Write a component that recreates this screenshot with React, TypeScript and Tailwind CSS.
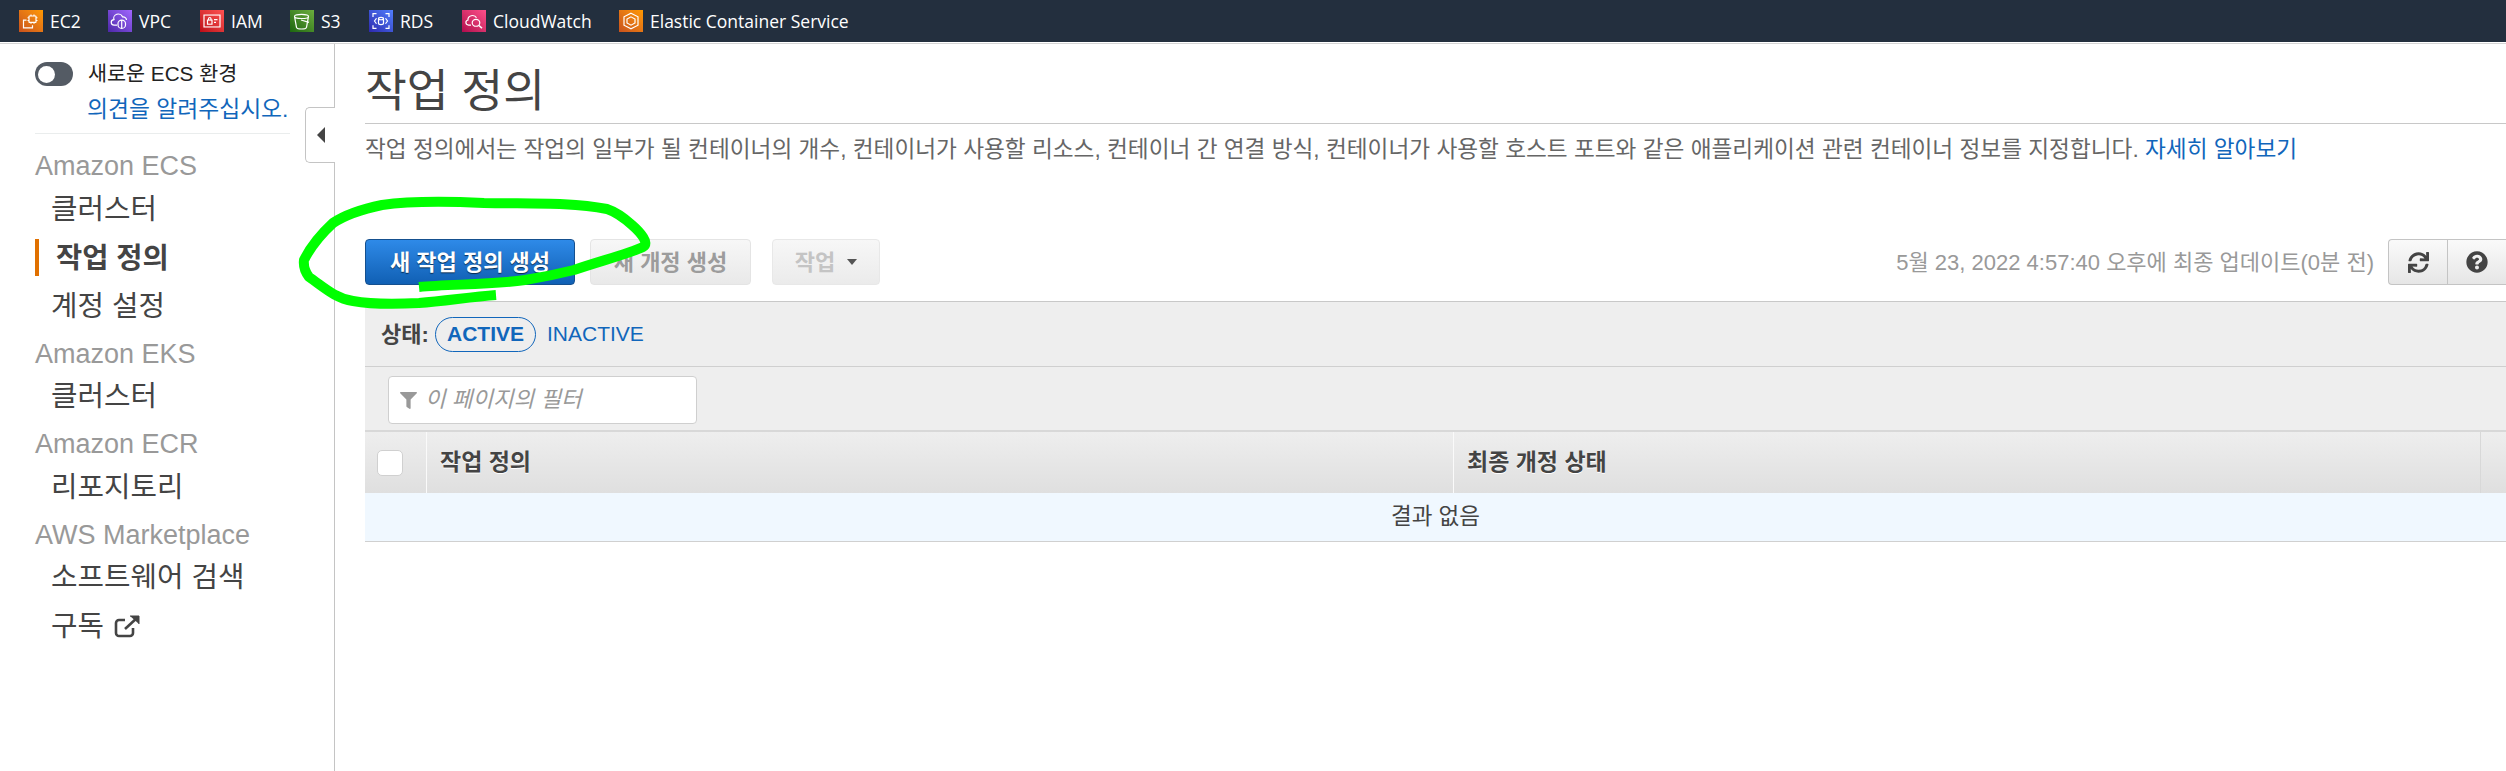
import React from "react";
import { FaFilter, FaQuestionCircle, FaSync } from "react-icons/fa";

const uiFont = { fontFamily: '"Liberation Sans", "Noto Sans CJK KR", Arial, sans-serif' };

const services = [
  { name: "EC2", bg: "from-[#c8511b] to-[#ff9900]", width: "w-[89px]" },
  { name: "VPC", bg: "from-[#4d27a8] to-[#a166ff]", width: "w-[92px]" },
  { name: "IAM", bg: "from-[#bd0816] to-[#ff5252]", width: "w-[90px]" },
  { name: "S3", bg: "from-[#1b660f] to-[#6cae3e]", width: "w-[79px]" },
  { name: "RDS", bg: "from-[#2e27ad] to-[#527fff]", width: "w-[93px]" },
  { name: "CloudWatch", bg: "from-[#b0084d] to-[#ff4f8b]", width: "w-[157px]" },
  { name: "Elastic Container Service", bg: "from-[#c8511b] to-[#ff9900]", width: "w-[240px]" },
];

function ServiceGlyph({ name }: { name: string }) {
  const p = { fill: "none", stroke: "#fff", strokeWidth: 1.2 };
  if (name === "EC2")
    return (
      <g {...p}>
        <rect x="10" y="6.500" width="7" height="7" rx="0.500" />
        <path d="M10 8.500H8.500M10 11.500H8.500M17 8.500h1.500M17 11.500h1.500M12 6.500V5M15 6.500V5M12 13.500V15M15 13.500V15" />
        <path d="M7.500 11H4.500v8.500h9V16.500" />
      </g>
    );
  if (name === "VPC")
    return (
      <g {...p}>
        <path d="M9 16.500H6.500a3 3 0 0 1-.5-6 4.500 4.500 0 0 1 8.500-3 3.500 3.500 0 0 1 4 3.500" />
        <rect x="10" y="11" width="7.500" height="9" rx="3.700" />
        <path d="M13.700 11v9" />
      </g>
    );
  if (name === "IAM")
    return (
      <g {...p}>
        <rect x="4" y="5.500" width="16" height="13" />
        <rect x="7.500" y="11" width="4.500" height="4.500" />
        <path d="M8.500 11V9.500a1.200 1.200 0 0 1 2.500 0V11M14 10.500h3.500M14 13.500h2" />
      </g>
    );
  if (name === "S3")
    return (
      <g {...p}>
        <path d="M4.500 7c0-3 14-3 14 0s-14 3-14 0zM4.500 7l2 12c1 2.200 9 2.200 10 0l2-12" />
        <path d="M11 11l8 2.500" />
      </g>
    );
  if (name === "RDS")
    return (
      <g {...p}>
        <path d="M4 7.500V4h3.500M16.500 4H20v3.500M4 16.500V20h3.500M16.500 20H20v-3.500" />
        <path d="M9.500 9.500c0-2 5-2 5 0v5c0 2-5 2-5 0zM9.500 9.500c0 1.500 5 1.500 5 0" />
        <path d="M7.500 9L5.500 12l2 3M16.500 9l2 3-2 3" />
      </g>
    );
  if (name === "CloudWatch")
    return (
      <g {...p}>
        <path d="M9 16.500H6.500a2.800 2.800 0 0 1-.5-5.500 4.500 4.500 0 0 1 8.500-2.500" />
        <circle cx="14" cy="14" r="3.800" />
        <path d="M17 17l3 3" strokeWidth="1.600" />
      </g>
    );
  return (
    <g {...p}>
      <path d="M12 3.500l7 4v9l-7 4-7-4v-9z" />
      <path d="M12 7.500l4 2.300v4.400l-4 2.300-4-2.300V9.800z" />
    </g>
  );
}

function TopBar() {
  return (
    <div
      className="h-[42px] bg-[#232f3e] flex items-center pl-[19px] text-[17.500px] text-white whitespace-nowrap"
      style={{ fontFamily: '"Open Sans", "Noto Sans", sans-serif' }}
    >
      {services.map((s) => (
        <div key={s.name} className={`flex items-center shrink-0 ${s.width}`}>
          <div className={`w-[24px] h-[22px] bg-linear-to-tr ${s.bg}`}>
            <svg viewBox="0 0 24 24" className="w-full h-full" preserveAspectRatio="none">
              <ServiceGlyph name={s.name} />
            </svg>
          </div>
          <span className="ml-[7px]">{s.name}</span>
        </div>
      ))}
    </div>
  );
}

function NavHeader({ children }: { children: React.ReactNode }) {
  return <div className="h-[42px] pt-[6px] leading-[36px] text-[27px] text-[#999] whitespace-nowrap">{children}</div>;
}

function NavItem({ children, active }: { children: React.ReactNode; active?: boolean }) {
  return (
    <div className="h-[48.500px] pt-[2px] flex items-center whitespace-nowrap">
      {active ? (
        <div className="h-[37px] border-l-[4px] border-[#e07000] pl-[17px] text-[28.500px] leading-[38px] font-bold text-[#444]">
          {children}
        </div>
      ) : (
        <div className="pl-[16px] text-[28.800px] text-[#444] flex items-center">{children}</div>
      )}
    </div>
  );
}

function Sidebar() {
  return (
    <div className="relative w-[335px] shrink-0 border-r border-[#c4c4c4] pl-[35px] pr-[44px]">
      <div className="flex items-center h-[24px] mt-[18px] whitespace-nowrap">
        <div className="w-[38px] h-[24px] rounded-full bg-[#545b64] flex items-center pl-[3px]">
          <div className="w-[17px] h-[17px] rounded-full bg-white" />
        </div>
        <span className="ml-[15px] text-[20.700px] text-[#222]">새로운 ECS 환경</span>
      </div>
      <div className="mt-[8px] pl-[52px] pb-[9px] mb-[8px] text-[22.800px] leading-[30px] text-[#1166bb] whitespace-nowrap border-b border-[#eaeded]">
        의견을 알려주십시오.
      </div>
      <NavHeader>Amazon ECS</NavHeader>
      <NavItem>클러스터</NavItem>
      <NavItem active>작업 정의</NavItem>
      <NavItem>계정 설정</NavItem>
      <NavHeader>Amazon EKS</NavHeader>
      <NavItem>클러스터</NavItem>
      <NavHeader>Amazon ECR</NavHeader>
      <NavItem>리포지토리</NavItem>
      <NavHeader>AWS Marketplace</NavHeader>
      <NavItem>소프트웨어 검색</NavItem>
      <NavItem>
        구독
        <svg viewBox="0 0 27 24" className="w-[27px] h-[24px] ml-[10px]" fill="none" stroke="#444" strokeWidth="2.600">
          <path d="M19 14v5a3 3 0 0 1-3 3H5a3 3 0 0 1-3-3V9a3 3 0 0 1 3-3h6" />
          <path d="M11 15L24 3" />
          <path d="M16 2h9v8" fill="#444" strokeWidth="1" />
        </svg>
      </NavItem>
      {/* collapse tab sits over the sidebar border */}
      <div className="absolute left-[305px] top-[63px] w-[30px] h-[56px] bg-white border border-r-0 border-[#c4c4c4] rounded-l-[5px] flex items-center justify-center">
        <div className="w-0 h-0 border-y-[8px] border-y-transparent border-r-[8px] border-r-[#444]" />
      </div>
    </div>
  );
}

function Toolbar() {
  return (
    <div className="mt-[75px] flex items-center h-[46px] mb-[16px]">
      <button className="w-[210px] h-[46px] rounded-[4px] border border-[#15508f] bg-linear-to-b from-[#2e8ae8] to-[#1060b4] text-white font-bold text-[22px] whitespace-nowrap [text-shadow:0_1px_1px_rgba(0,0,0,0.6)]">
        새 작업 정의 생성
      </button>
      <button className="ml-[15px] w-[161px] h-[46px] rounded-[4px] border border-[#e4e4e4] bg-linear-to-b from-[#f7f7f7] to-[#e9e9e9] text-[#9c9c9c] font-bold text-[22px] whitespace-nowrap">
        새 개정 생성
      </button>
      <button className="ml-[21px] w-[108px] h-[46px] rounded-[4px] border border-[#e8e8e8] bg-linear-to-b from-[#f7f7f7] to-[#ebebeb] text-[#c4c4c4] font-bold text-[22px] flex items-center justify-center">
        작업
        <span className="ml-[12px] w-0 h-0 border-x-[5px] border-x-transparent border-t-[6px] border-t-[#555]" />
      </button>
      <div className="ml-auto text-[22px] text-[#999] whitespace-nowrap mr-[14px]">5월 23, 2022 4:57:40 오후에 최종 업데이트(0분 전)</div>
      <div className="flex w-[118px] h-[46px] rounded-l-[4px] border border-r-0 border-[#c4c4c4] bg-linear-to-b from-[#fafafa] to-[#e6e6e6] shrink-0">
        <div className="w-[59px] border-r border-[#c4c4c4] flex items-center justify-center text-[#444]">
          <FaSync size={21} />
        </div>
        <div className="flex-1 flex items-center justify-center text-[#444]">
          <FaQuestionCircle size={22} />
        </div>
      </div>
    </div>
  );
}

function ResultsTable() {
  return (
    <div>
      <div className="bg-[#eeeeee] border-t border-[#c8c8c8]">
        <div className="h-[65px] border-b border-[#cfcfcf] flex items-center pl-[16px] text-[21px] whitespace-nowrap">
          <span className="w-[48px] font-bold text-[22px] text-[#444]">상태:</span>
          <span className="ml-[6px] h-[35px] w-[101px] rounded-full border border-[#1166bb] font-bold text-[#1166bb] flex items-center justify-center">ACTIVE</span>
          <span className="ml-[11px] text-[#1166bb]">INACTIVE</span>
        </div>
        <div className="h-[65px] border-b-2 border-[#d8d8d8] pt-[9px] pl-[23px]">
          <div className="w-[309px] h-[48px] bg-white rounded-[4px] border border-[#cfcfcf] flex items-center pl-[11px]">
            <FaFilter size={17} className="text-[#999]" />
            <span className="ml-[8px] text-[22.400px] italic text-[#999]">이 페이지의 필터</span>
          </div>
        </div>
      </div>
      <div className="flex h-[61px] bg-linear-to-b from-[#eeeeee] to-[#dfdfdf] text-[23px] font-bold text-[#444] [text-shadow:0_1px_0_#fff]">
        <div className="w-[62px] border-r border-[#fafafa] flex items-center pl-[12px]">
          <div className="w-[26px] h-[26px] rounded-[5px] bg-white border border-[#d0d0d0]" />
        </div>
        <div className="w-[1027px] border-r border-[#fafafa] flex items-center pl-[13px]">작업 정의</div>
        <div className="w-[1027px] border-r border-[#d8d8d8] flex items-center pl-[13px]">최종 개정 상태</div>
      </div>
      <div className="h-[49px] bg-[#f0f8ff] border-b border-[#d0d0d0] flex items-center justify-center text-[22.500px] text-[#444]">결과 없음</div>
    </div>
  );
}

export default function App() {
  return (
    <div className="relative h-[771px] w-[2506px] overflow-hidden bg-white" style={uiFont}>
      <TopBar />
      <div className="h-[2px] bg-[#d5d5d5] border-t border-white" />
      <div className="flex h-[727px]">
        <Sidebar />
        <div className="flex-1 pl-[30px] min-w-0">
          <h1 className="mt-[15px] h-[65px] pt-[9px] text-[45.500px] leading-[48px] font-normal text-[#444] border-b border-[#c8c8c8] whitespace-nowrap">작업 정의</h1>
          <p className="mt-[10px] text-[22.650px] leading-[30px] text-[#666] whitespace-nowrap">
            작업 정의에서는 작업의 일부가 될 컨테이너의 개수, 컨테이너가 사용할 리소스, 컨테이너 간 연결 방식, 컨테이너가 사용할 호스트 포트와 같은 애플리케이션 관련 컨테이너 정보를 지정합니다.{" "}
            <span className="text-[#1166bb]">자세히 알아보기</span>
          </p>
          <Toolbar />
          <ResultsTable />
        </div>
      </div>
      {/* hand-drawn highlight from the screenshot */}
      <svg className="absolute left-0 top-0 pointer-events-none" width="2506" height="771" fill="none">
        <path
          d="M419 287C450 284 490 285 525 280C550 276 566 272 574 270C600 261 628 254 643 247C650 243 640 232 632 225C622 216 616 212 607 209C570 202 530 204 484 203C440 201 410 201 382 205C358 210 345 215 333 223C320 235 310 248 304 260C303 268 306 273 309 277C325 288 335 298 353 301C375 305 400 304 419 303C445 301 470 297 496 295"
          stroke="#00ff00"
          strokeWidth="10"
          strokeLinejoin="round"
        />
      </svg>
    </div>
  );
}
